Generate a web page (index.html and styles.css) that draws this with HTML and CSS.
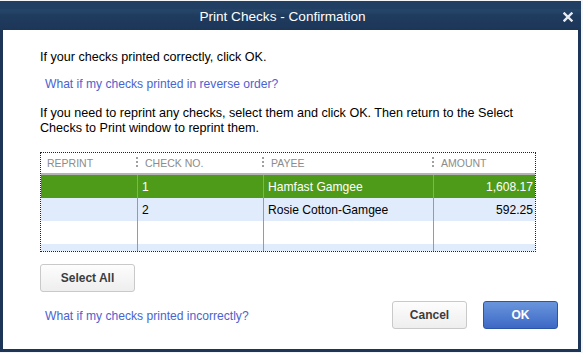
FILE: index.html
```html
<!DOCTYPE html>
<html>
<head>
<meta charset="utf-8">
<link rel="stylesheet" href="styles.css">
</head>
<body>
<div class="dialog">
  <div class="titlebar">
    <span class="title">Print Checks - Confirmation</span>
    <span class="close">
      <svg width="10" height="10" viewBox="0 0 10 10"><path d="M1.5 1.5 L8.5 8.5 M8.5 1.5 L1.5 8.5" stroke="#e8ecf2" stroke-width="2.4" stroke-linecap="square"/></svg>
    </span>
  </div>
  <div class="content">
    <p class="msg first">If your checks printed correctly, click OK.</p>
    <a class="link reverse">What if my checks printed in reverse order?</a>
    <p class="msg para">If you need to reprint any checks, select them and click OK. Then return to the Select<br>Checks to Print window to reprint them.</p>
    <div class="table">
      <div class="row head">
        <div class="cell c1">REPRINT</div>
        <div class="cell c2"><span class="grip"></span>CHECK NO.</div>
        <div class="cell c3"><span class="grip"></span>PAYEE</div>
        <div class="cell c4"><span class="grip"></span>AMOUNT</div>
      </div>
      <div class="row sel">
        <div class="cell c1"></div>
        <div class="cell c2">1</div>
        <div class="cell c3">Hamfast Gamgee</div>
        <div class="cell c4 num">1,608.17</div>
      </div>
      <div class="row alt">
        <div class="cell c1"></div>
        <div class="cell c2">2</div>
        <div class="cell c3">Rosie Cotton-Gamgee</div>
        <div class="cell c4 num">592.25</div>
      </div>
      <div class="row">
        <div class="cell c1"></div>
        <div class="cell c2"></div>
        <div class="cell c3"></div>
        <div class="cell c4"></div>
      </div>
      <div class="row alt short">
        <div class="cell c1"></div>
        <div class="cell c2"></div>
        <div class="cell c3"></div>
        <div class="cell c4"></div>
      </div>
    </div>
    <button class="btn selectall">Select All</button>
    <div class="footer">
      <a class="link incorrect">What if my checks printed incorrectly?</a>
      <div class="actions">
        <button class="btn cancel">Cancel</button>
        <button class="btn ok">OK</button>
      </div>
    </div>
  </div>
</div>
</body>
</html>
```
FILE: styles.css
```css
html, body {
  margin: 0;
  padding: 0;
}
body {
  background: #f4f5f7;
  font-family: "Liberation Sans", Arial, sans-serif;
  padding-top: 1px;
}
.dialog {
  width: 581px;
  height: 351px;
  box-sizing: border-box;
  border: 3px solid #1d3657;
  border-top: 0;
  background: #fff;
  display: flex;
  flex-direction: column;
}
.titlebar {
  height: 29px;
  background: #1f3a5d;
  background-image: linear-gradient(#213f63 0, #213f63 8px, #264669 9px, #1f3b5e 15px, #1c3658 29px);
  display: flex;
  align-items: center;
  justify-content: center;
  position: relative;
  margin: 0 -3px;
}
.title {
  color: #fff;
  font-size: 13.6px;
  margin-left: -16px;
  margin-top: 1px;
}
.close {
  position: absolute;
  right: 8px;
  top: 11px;
  line-height: 0;
}
.content {
  padding: 20px 0 0 37px;
  flex: 1;
  display: flex;
  flex-direction: column;
  align-items: flex-start;
  font-size: 12.6px;
  color: #000;
}
.msg {
  margin: 0;
  line-height: 15px;
}
.link {
  color: #4b63cf;
  font-size: 12.1px;
  line-height: 15px;
  cursor: pointer;
}
.reverse {
  margin: 12px 0 0 5px;
}
.para {
  margin-top: 14px;
}
.table {
  margin-top: 16px;
  width: 496px;
  height: 100px;
  box-sizing: border-box;
  border: 1px dotted #222;
  overflow: hidden;
}
.row {
  display: flex;
  height: 23px;
}
.row.head {
  height: 20px;
  border-bottom: 2px solid #b3b3b3;
  color: #8c8c8c;
}
.cell {
  box-sizing: border-box;
  display: flex;
  align-items: center;
  padding-left: 4px;
  font-size: 12.1px;
}
.head .cell {
  font-size: 10.5px;
  padding-left: 0;
}
.head .c1 {
  padding-left: 6px;
}
.c1 { width: 96px; }
.c2 { width: 126px; }
.c3 { width: 170px; }
.c4 { flex: 1; }
.row:not(.head) .c2,
.row:not(.head) .c3,
.row:not(.head) .c4 {
  border-left: 1px solid #9a9a9a;
}
.grip {
  width: 2px;
  height: 12px;
  margin-left: -1px;
  margin-right: 7px;
  background: repeating-linear-gradient(#a0a0a0 0, #a0a0a0 2px, transparent 2px, transparent 4px);
}
.num {
  justify-content: flex-end;
  padding-right: 2px;
}
.row.sel {
  background: #4e9b1a;
  color: #fff;
}
.row.alt {
  background: #e0ecfb;
}
.row.short {
  height: 9px;
}
.btn {
  font-family: "Liberation Sans", Arial, sans-serif;
  font-weight: bold;
  font-size: 12px;
  border-radius: 3px;
  height: 28px;
  box-sizing: border-box;
  cursor: pointer;
}
.selectall, .cancel {
  background: linear-gradient(#fdfdfd, #eeeeee);
  border: 1px solid #c9c9c9;
  color: #3c3c3c;
}
.selectall {
  margin-top: 12px;
  width: 95px;
}
.footer {
  margin-top: 9px;
  width: 518px;
  display: flex;
  justify-content: space-between;
  align-items: center;
}
.incorrect {
  margin-left: 5px;
  margin-top: 3px;
}
.actions {
  display: flex;
  gap: 16px;
}
.cancel {
  width: 75px;
}
.ok {
  width: 75px;
  background: linear-gradient(#6a95dc, #3d69c6);
  border: 1px solid #2d55a6;
  color: #fff;
}
```
